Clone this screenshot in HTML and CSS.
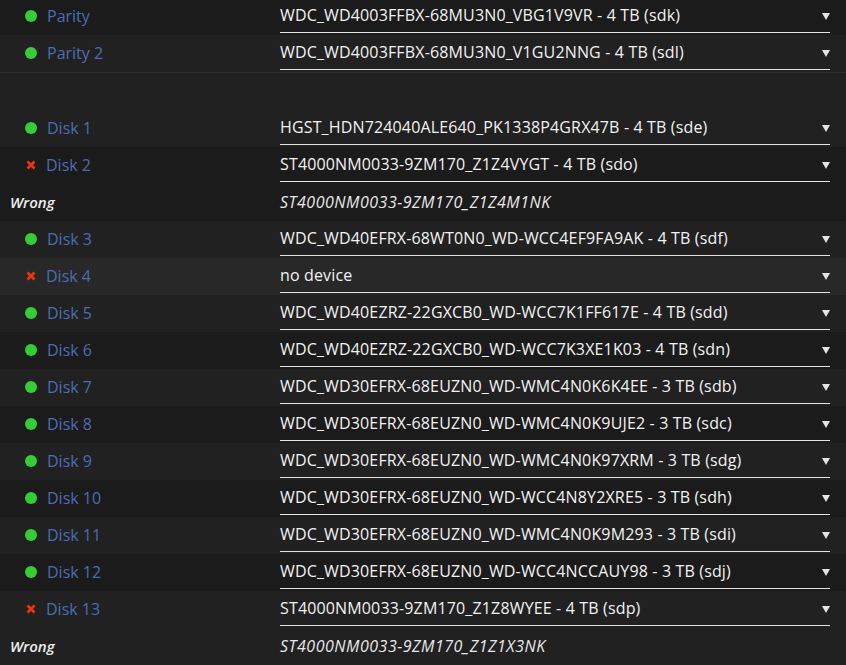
FILE: index.html
```html
<!DOCTYPE html>
<html lang="en">
<head>
    <meta charset="UTF-8">
    <meta name="viewport" content="width=device-width, initial-scale=1.0">
    <title>Array Devices</title>
    <link rel="stylesheet" href="styles.css">
</head>
<body>
    <div class="array">
        <div class="dev">
            <div class="line">
                <span class="name"><span class="ok"></span><a href="#">Parity</a></span>
                <span class="pick"><span class="value">WDC_WD4003FFBX-68MU3N0_VBG1V9VR - 4 TB (sdk)</span></span>
            </div>
        </div>
        <div class="dev">
            <div class="line">
                <span class="name"><span class="ok"></span><a href="#">Parity 2</a></span>
                <span class="pick"><span class="value">WDC_WD4003FFBX-68MU3N0_V1GU2NNG - 4 TB (sdl)</span></span>
            </div>
        </div>
        <div class="dev gap"></div>
        <div class="dev">
            <div class="line">
                <span class="name"><span class="ok"></span><a href="#">Disk 1</a></span>
                <span class="pick"><span class="value">HGST_HDN724040ALE640_PK1338P4GRX47B - 4 TB (sde)</span></span>
            </div>
        </div>
        <div class="dev">
            <div class="line">
                <span class="name"><svg class="bad" viewBox="0 0 10 10"><path d="M1.5 1.5 L8.5 8.5 M8.5 1.5 L1.5 8.5"/></svg><a href="#">Disk 2</a></span>
                <span class="pick"><span class="value">ST4000NM0033-9ZM170_Z1Z4VYGT - 4 TB (sdo)</span></span>
            </div>
            <div class="line">
                <span class="name wrong">Wrong</span>
                <span class="was">ST4000NM0033-9ZM170_Z1Z4M1NK</span>
            </div>
        </div>
        <div class="dev">
            <div class="line">
                <span class="name"><span class="ok"></span><a href="#">Disk 3</a></span>
                <span class="pick"><span class="value">WDC_WD40EFRX-68WT0N0_WD-WCC4EF9FA9AK - 4 TB (sdf)</span></span>
            </div>
        </div>
        <div class="dev hover">
            <div class="line">
                <span class="name"><svg class="bad" viewBox="0 0 10 10"><path d="M1.5 1.5 L8.5 8.5 M8.5 1.5 L1.5 8.5"/></svg><a href="#">Disk 4</a></span>
                <span class="pick"><span class="value">no device</span></span>
            </div>
        </div>
        <div class="dev">
            <div class="line">
                <span class="name"><span class="ok"></span><a href="#">Disk 5</a></span>
                <span class="pick"><span class="value">WDC_WD40EZRZ-22GXCB0_WD-WCC7K1FF617E - 4 TB (sdd)</span></span>
            </div>
        </div>
        <div class="dev">
            <div class="line">
                <span class="name"><span class="ok"></span><a href="#">Disk 6</a></span>
                <span class="pick"><span class="value">WDC_WD40EZRZ-22GXCB0_WD-WCC7K3XE1K03 - 4 TB (sdn)</span></span>
            </div>
        </div>
        <div class="dev">
            <div class="line">
                <span class="name"><span class="ok"></span><a href="#">Disk 7</a></span>
                <span class="pick"><span class="value">WDC_WD30EFRX-68EUZN0_WD-WMC4N0K6K4EE - 3 TB (sdb)</span></span>
            </div>
        </div>
        <div class="dev">
            <div class="line">
                <span class="name"><span class="ok"></span><a href="#">Disk 8</a></span>
                <span class="pick"><span class="value">WDC_WD30EFRX-68EUZN0_WD-WMC4N0K9UJE2 - 3 TB (sdc)</span></span>
            </div>
        </div>
        <div class="dev">
            <div class="line">
                <span class="name"><span class="ok"></span><a href="#">Disk 9</a></span>
                <span class="pick"><span class="value">WDC_WD30EFRX-68EUZN0_WD-WMC4N0K97XRM - 3 TB (sdg)</span></span>
            </div>
        </div>
        <div class="dev">
            <div class="line">
                <span class="name"><span class="ok"></span><a href="#">Disk 10</a></span>
                <span class="pick"><span class="value">WDC_WD30EFRX-68EUZN0_WD-WCC4N8Y2XRE5 - 3 TB (sdh)</span></span>
            </div>
        </div>
        <div class="dev">
            <div class="line">
                <span class="name"><span class="ok"></span><a href="#">Disk 11</a></span>
                <span class="pick"><span class="value">WDC_WD30EFRX-68EUZN0_WD-WMC4N0K9M293 - 3 TB (sdi)</span></span>
            </div>
        </div>
        <div class="dev">
            <div class="line">
                <span class="name"><span class="ok"></span><a href="#">Disk 12</a></span>
                <span class="pick"><span class="value">WDC_WD30EFRX-68EUZN0_WD-WCC4NCCAUY98 - 3 TB (sdj)</span></span>
            </div>
        </div>
        <div class="dev">
            <div class="line">
                <span class="name"><svg class="bad" viewBox="0 0 10 10"><path d="M1.5 1.5 L8.5 8.5 M8.5 1.5 L1.5 8.5"/></svg><a href="#">Disk 13</a></span>
                <span class="pick"><span class="value">ST4000NM0033-9ZM170_Z1Z8WYEE - 4 TB (sdp)</span></span>
            </div>
            <div class="line">
                <span class="name wrong">Wrong</span>
                <span class="was">ST4000NM0033-9ZM170_Z1Z1X3NK</span>
            </div>
        </div>
    </div>
</body>
</html>
```

FILE: styles.css
```css
body {
    margin: 0;
    background-color: #1c1b1b;
    font-family: "Open Sans", "Noto Sans", sans-serif;
    font-size: 16px;
    color: #f2f2f2;
}

.array {
    margin-top: -2px;
}

.dev {
    background-color: #1c1b1b;
}

.dev:nth-child(even) {
    background-color: #212121;
}

.dev.hover {
    background-color: #282828;
}

.dev.gap {
    height: 37px;
    border-top: 1px solid #2e2e2e;
    background-color: #212121;
}

.line {
    display: flex;
    height: 37px;
}

.name {
    display: flex;
    align-items: center;
    width: 280px;
    padding-left: 25px;
    padding-bottom: 2px;
    box-sizing: border-box;
}

.name a {
    color: #4a6db5;
    text-decoration: none;
}

.ok {
    width: 12px;
    height: 12px;
    border-radius: 50%;
    background-color: #34cd35;
    margin-right: 10px;
    margin-top: 1px;
}

.bad {
    width: 10px;
    height: 10px;
    margin-left: 1px;
    margin-right: 10px;
    margin-top: 1px;
    fill: none;
    stroke: #f2330f;
    stroke-width: 2.6;
}

.name.wrong {
    padding-left: 10px;
    font-size: 15px;
    font-style: italic;
    font-weight: 600;
    color: #ececec;
}

.pick {
    display: flex;
    align-items: center;
    justify-content: space-between;
    width: 550px;
    height: 34px;
    margin-top: 1px;
    padding-bottom: 2px;
    box-sizing: border-box;
    border-bottom: 1px solid #e4e4e4;
    letter-spacing: 0.15px;
}

.pick::after {
    content: "";
    border-left: 4px solid transparent;
    border-right: 4px solid transparent;
    border-top: 7px solid #e4e4e4;
    margin-top: 3px;
}

.was {
    display: flex;
    align-items: center;
    padding-bottom: 2px;
    font-style: italic;
    letter-spacing: 0.5px;
    color: #e8e8e8;
}
```
